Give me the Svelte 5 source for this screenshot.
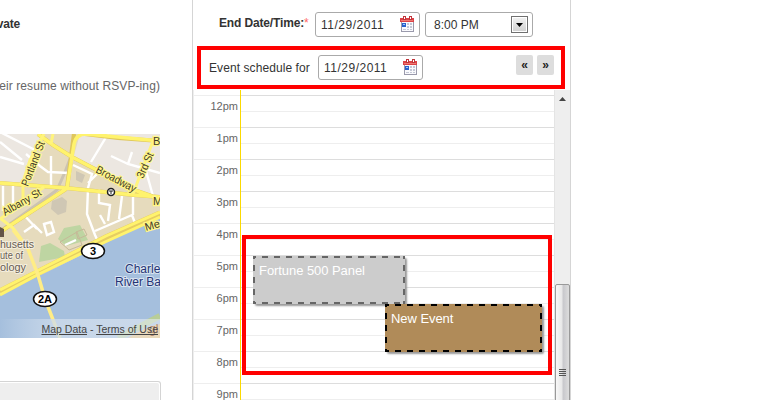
<script>
  const hours = ['12pm', '1pm', '2pm', '3pm', '4pm', '5pm', '6pm', '7pm', '8pm', '9pm'];
</script>

{#snippet calendar()}
  <svg class="cal" width="15" height="17" viewBox="0 0 15 17" shape-rendering="crispEdges">
    <rect x="1" y="5" width="13" height="11" fill="#9a9aac" />
    <rect x="2" y="6" width="11" height="9" fill="#fafafd" />
    <rect x="0" y="2" width="14" height="4" fill="#dc4347" />
    <rect x="1" y="4" width="12" height="1" fill="#ee7974" />
    <path d="M3 0h3v4H3zM9 0h3v4H9z" fill="#c0343a" />
    <path d="M4 1h1v2H4zM10 1h1v2h-1z" fill="#fff" />
    <path d="M7 7h2v2H7zM10 7h2v2h-2zM7 10h2v2H7zM10 10h2v2h-2zM3 13h3v1H3zM7 13h2v1H7zM10 13h2v1h-2z" fill="#c4c8d6" />
    <rect x="2" y="7" width="4" height="4" fill="#2a62cc" />
    <rect x="3" y="8" width="2" height="1" fill="#9fc5ff" />
  </svg>
{/snippet}

<div class="page">
  <section class="left">
    <strong>vate</strong>
    <p>eir resume without RSVP-ing)</p>
    <div class="map">
      <svg width="160" height="204" viewBox="0 0 160 204">
        <defs>
          <linearGradient id="fade"><stop offset="0" stop-color="#a5bfdd" /><stop offset=".35" stop-color="#d0ddec" stop-opacity=".75" /><stop offset="1" stop-color="#e8eef5" stop-opacity=".55" /></linearGradient>
        </defs>
        <rect width="160" height="204" fill="#e6dbbd" />
        <path d="M0 0H42L30 26 23 50 0 49Z M80 0H160V63L137 59 108 42 73 25Z" fill="#ece7e1" />
        <path d="M62 63l5 4-1 11-8 3-7-6 1-8z M76 37l9 4-3 8-6-3z" fill="#cfc7b4" />
        <path d="M64 94l16-3 8 15-22 6-8-7z M41 112l9-3 14 8 1 6-26 5z" fill="#bed5a2" />
        <path d="M0 97L57 56 65 38 70 25" fill="none" stroke="#cbc3b2" stroke-width="3" />
        <path d="M0 8L22 26 M0 23L24 30 M26 20L40 32 48 38 70 39 M51 22V54 M0 -2L35 16 M73 31L92 40 88 54 87 80 95 101 104 121 M88 49L97 40 M99 55V69L110 71 108 87 M122 62L119 85 M95 97L132 81 138 97 M133 63V81 M3 52V77 M13 52V70 M24 81L37 95 M24 98L34 91 42 99 M44 90L51 88 54 98 47 101Z M100 81L105 90 M132 18L128 30 160 39 M111 22L128 30 M91 28L108 0 M146 37L153 62 M65 111L76 106" fill="none" stroke="#fff" stroke-width="2.4" />
        <path d="M76 98l8-3 3 6-9 4z M60 108l17-10 5 13-13 5z" fill="none" stroke="#c6b998" />
        <path d="M0 160L45 139 160 82V204H0Z" fill="#a5bfdd" />
        <path d="M0 158L35 140 106 104 160 80" fill="none" stroke="#e6cd62" stroke-width="7" />
        <path d="M0 156L35 138 106 102 160 78 M0 161L39 140 105 108 160 83" fill="none" stroke="#fff36d" stroke-width="3" />
        <path d="M38 0L53 11 72 23 137 57 160 65 M0 49L66 54 134 61 160 63 M74 0L67 54 M0 98L66 55" fill="none" stroke="#dfc75c" stroke-width="4.2" />
        <path d="M85 0L118 4 160 7" fill="none" stroke="#dfc75c" stroke-width="4" />
        <path d="M38 0L53 11 72 23 137 57 160 65 M0 49L66 54 134 61 160 63 M67 54L74 10Q76 0 86 0L160 7 M0 98L66 55" fill="none" stroke="#fff36d" stroke-width="3.5" />
        <path d="M44 0L30 26 23 48V66 M53 0L51 10 M153 7L133 60 M0 85L44 53 M0 84L13 94 24 109" fill="none" stroke="#fff47d" stroke-width="3" />
        <path d="M13 96L28 115 38 141 45 165 60 204" fill="none" stroke="#ffed86" stroke-width="3.5" />
        <path d="M0 93l4 2v8H0z" fill="#635448" />
        <path d="M128 204Q145 193 160 190V204Z" fill="#eebf70" />
        <path d="M118 204L160 182" stroke="#b8cd98" stroke-width="6" />
        <rect y="185" width="160" height="19" fill="url(#fade)" />
        <g class="road">
          <text transform="translate(28 53) rotate(-69)" textLength="47" lengthAdjust="spacingAndGlyphs">Portland St</text>
          <text transform="translate(5 82) rotate(-30)" textLength="43" lengthAdjust="spacingAndGlyphs">Albany St</text>
          <text transform="translate(95 38) rotate(28)" textLength="44" lengthAdjust="spacingAndGlyphs">Broadway</text>
          <text transform="translate(143 45) rotate(-66)" textLength="27" lengthAdjust="spacingAndGlyphs">3rd St</text>
          <text transform="translate(146 97) rotate(-16)">Me</text>
          <text x="153" y="11">B</text><text x="153" y="71">M</text>
        </g>
        <circle cx="111" cy="58" r="3.5" fill="#fff" stroke="#222" stroke-width="1.5" />
        <path d="M109 57h4M111 57v3" stroke="#222" />
        <g class="place"><text x="0" y="114" textLength="34" lengthAdjust="spacingAndGlyphs">husetts</text><text x="0" y="125" textLength="23" lengthAdjust="spacingAndGlyphs">ute of</text><text x="0" y="137" textLength="26" lengthAdjust="spacingAndGlyphs">ology</text></g>
        <g class="river"><text x="125" y="139">Charle</text><text x="115" y="152">River Ba</text></g>
        <g class="shield"><ellipse cx="93" cy="117" rx="11.5" ry="7.5" /><text x="93" y="121">3</text><ellipse cx="45" cy="165" rx="11.5" ry="7.5" /><text x="45" y="169">2A</text></g>
        <text x="149" y="199" class="logo">gl</text>
      </svg>
      <div class="terms"><u>Map Data</u> - <u>Terms of Use</u></div>
    </div>
    <div class="box"></div>
  </section>

  <section class="panel">
    <div class="end">
      <b>End Date/Time:<i>*</i></b>
      <div class="field date"><span>11/29/2011</span>{@render calendar()}</div>
      <div class="field time"><span>8:00 PM</span><div class="drop"><svg width="7" height="4" viewBox="0 0 7 4"><path d="M0 0h7L3.5 4z" /></svg></div></div>
    </div>
    <div class="schedule">
      <label for="day">Event schedule for</label>
      <div class="field date" id="day"><span>11/29/2011</span>{@render calendar()}</div>
      <div class="nav"><span>«</span><span>»</span></div>
    </div>
    <div class="agenda">
      <div class="grid">
        {#each hours as h}
          <div class="row"><div class="hour">{h}</div><div class="slot"></div></div>
        {/each}
        <div class="marked">
          <div class="event gray">Fortune 500 Panel
            <svg width="152" height="48"><path d="M0 1H152" stroke-dashoffset="3" /><path d="M0 47H152" stroke-dashoffset="3" /><path d="M1 0V48M151 0V48" stroke-dashoffset="3" /></svg>
          </div>
          <div class="event brown">New Event
            <svg width="157" height="48"><path d="M0 1H157" stroke-dashoffset="2" /><path d="M0 47H157" stroke-dashoffset="2" /><path d="M1 0V48M156 0V48" stroke-dashoffset="3" /></svg>
          </div>
        </div>
      </div>
      <div class="scroll">
        <svg class="up" width="7" height="4" viewBox="0 0 7 4"><path d="M0 4h7L3.5 0z" fill="#444" /></svg>
        <div class="thumb"><i></i><i></i><i></i><i></i></div>
      </div>
    </div>
  </section>
</div>

<style>
  :global(body) { margin: 0; background: #fff; }
  * { box-sizing: border-box; }
  .page { display: flex; width: 766px; height: 400px; overflow: hidden; font: 12px/16px "Liberation Sans", Arial, sans-serif; color: #333; }
  .left { width: 192px; height: 400px; flex: none; display: flex; flex-direction: column; overflow: hidden; }
  .left > * { flex: none; }
  .left strong { width: 20px; margin-top: 16px; height: 16px; letter-spacing: -.2px; display: flex; justify-content: flex-end; }
  .left p { margin: 46px 0 0; width: 160px; height: 16px; display: flex; justify-content: flex-end; white-space: nowrap; color: #666; letter-spacing: .1px; }
  .map { position: relative; width: 160px; height: 204px; margin-top: 40px; overflow: hidden; }
  .map svg { display: block; }
  .terms { position: absolute; right: 2px; bottom: 2px; font-size: 10.5px; line-height: 14px; white-space: nowrap; color: #444; }
  .road { font-size: 11px; fill: #3f3a28; stroke: #fff689; stroke-width: 2.5px; paint-order: stroke; }
  .place { font-size: 11.5px; fill: #685c52; stroke: #f5efdf; stroke-width: 2px; paint-order: stroke; }
  .river { font-size: 12px; fill: #253474; stroke: #d8e3f0; stroke-width: 2px; paint-order: stroke; }
  .shield { font-size: 11px; font-weight: bold; text-anchor: middle; }
  .shield ellipse { fill: #fff; stroke: #111; stroke-width: 1.5px; }
  .logo { font-size: 12px; fill: #ae836d; }
  .box { width: 161px; height: 40px; margin-top: 43px; border: 1px solid #d4d4d4; border-left: 0; border-radius: 0 3px 0 0; background: #eee; box-shadow: inset -1px 1px #fff; }
  .panel { width: 379px; height: 400px; flex: none; border: solid #d5d5d5; border-width: 0 1px; display: flex; flex-direction: column; }
  .end { height: 46px; padding: 12px 0 0 26px; display: flex; flex: none; }
  .end b { width: 96px; padding-top: 3px; white-space: nowrap; letter-spacing: -.15px; }
  .end b i { font-style: normal; font-weight: normal; color: #f66; }
  .field { height: 25px; border: 1px solid #aaa; border-radius: 3px; display: flex; align-items: center; justify-content: space-between; background: #fff; }
  .date { width: 105px; padding: 0 4px 0 5px; letter-spacing: .5px; }
  .time { width: 108px; padding: 0 4px 0 8px; margin-left: 5px; }
  .drop { width: 17px; height: 17px; border: 1px solid #707070; box-shadow: inset 0 0 0 1px #fff; background: linear-gradient(#f2f2f2, #d0d0d0); display: flex; align-items: center; justify-content: center; }
  .schedule { width: 368px; height: 43px; margin-left: 4px; flex: none; border: 4px solid #f00; display: flex; align-items: flex-start; padding: 5px 7px 0 8px; }
  .schedule label { width: 109px; padding-top: 5px; white-space: nowrap; letter-spacing: .08px; }
  .nav { margin-left: auto; display: flex; gap: 4px; }
  .nav span { width: 17px; height: 20px; border-radius: 2px; background: #ddd; color: #222; text-align: center; font-weight: bold; line-height: 20px; }
  .agenda { flex: 1; min-height: 0; display: flex; margin-top: 1px; overflow: hidden; border-left: 1px solid #eee; }
  .grid { width: 360px; flex: none; padding-top: 5px; position: relative; background: linear-gradient(90deg, transparent 46px, #fbd900 46px, #fbd900 47px, transparent 47px); }
  .row { height: 32px; display: flex; }
  .hour { width: 46px; border-top: 1px solid #eee; text-align: right; padding: 2px 2px 0 0; font-size: 11px; color: #666; }
  .slot { flex: 1; margin-left: 1px; border-top: 1px solid #ddd; background: linear-gradient(#fff 15px, #eee 15px, #eee 16px, #fff 16px); }
  .marked { position: absolute; left: 48px; top: 145px; width: 310px; height: 140px; border: 4px solid #f00; }
  .event { position: absolute; height: 48px; padding: 7px 6px; color: #fff; font-size: 13px; letter-spacing: -.06px; box-shadow: 2px 2px 2px #999; border-radius: 2px; }
  .event svg { position: absolute; left: 0; top: 0; stroke-width: 2; stroke-dasharray: 6 6; fill: none; }
  .gray { left: 7px; top: 17px; width: 152px; background: #ccc; stroke: #666; }
  .brown { left: 139px; top: 65px; width: 157px; background: #b08b59; stroke: #000; }
  .scroll { width: 17px; background: #eee; border-left: 1px solid #e4e4e4; display: flex; flex-direction: column; align-items: center; }
  .up { margin-top: 7px; flex: none; }
  .thumb { margin-top: 183px; width: 15px; height: 130px; flex: none; border: 1px solid #999; border-radius: 2px; background: linear-gradient(90deg, #f8f8f8, #e8e8e8 45%, #c8c8cc 55%, #ddd); display: flex; flex-direction: column; align-items: center; gap: 1px; padding-top: 84px; }
  .thumb i { width: 7px; height: 1px; background: #555; flex: none; }
</style>
